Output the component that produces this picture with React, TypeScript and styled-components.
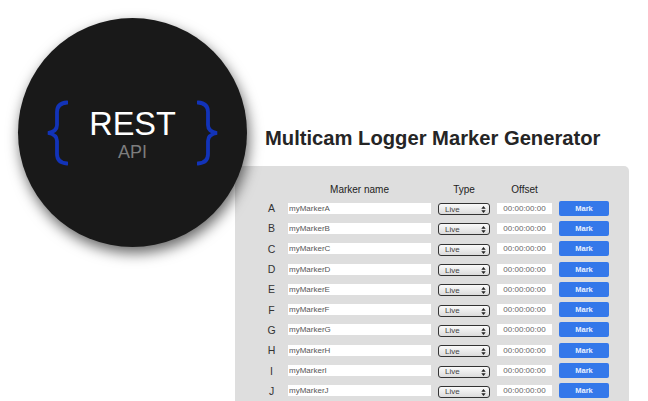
import React from 'react';
import styled, { createGlobalStyle, css } from 'styled-components';

const GlobalStyle = createGlobalStyle`
  html, body {
    margin: 0;
    height: 401px;
    overflow: hidden;
    background: #fff;
    font-family: "Liberation Sans", Arial, sans-serif;
    color: #222;
  }
`;

const Page = styled.div`
  position: relative;
  height: 401px;
  padding: 126px 0 0 235px;
  box-sizing: border-box;
  overflow: hidden;
`;

const Badge = styled.div`
  position: absolute;
  left: 18px;
  top: 18px;
  width: 229px;
  height: 229px;
  border-radius: 50%;
  background: #191919;
  box-shadow: 2px 6px 14px rgba(0, 0, 0, 0.6);
  display: flex;
  align-items: center;
  justify-content: space-between;
  padding: 0 28px;
  box-sizing: border-box;
  z-index: 2;
`;

const BadgeText = styled.div`
  display: flex;
  flex-direction: column;
  align-items: center;
  margin-top: 4px;
`;

const RestLabel = styled.div`
  font-size: 32.5px;
  line-height: 34px;
  color: #fff;
`;

const ApiLabel = styled.div`
  font-size: 18px;
  line-height: 20px;
  margin-top: 1px;
  color: #7d7d7d;
`;

const Brace = styled.svg`
  width: 22px;
  height: 66px;
  flex: none;
`;

const Title = styled.h1`
  margin: 0 0 16px 30px;
  font-size: 20.2px;
  line-height: 24px;
  font-weight: 700;
  color: #252525;
  white-space: nowrap;
`;

const Panel = styled.div`
  width: 394px;
  padding: 14px 0 0 27px;
  box-sizing: border-box;
  height: 300px;
  background: #dedede;
  border-radius: 5px;
`;

const columns = css`
  display: grid;
  grid-template-columns: 19px 143px 52px 55px 50px;
  column-gap: 7px;
  align-items: center;
`;

const HeadRow = styled.div`
  ${columns}
  height: 18px;
`;

const MarkerRow = styled.div`
  ${columns}
  height: 20.3px;
`;

const HeadCell = styled.div`
  font-size: 10px;
  text-align: center;
  color: #222;
`;

const Letter = styled.div`
  font-size: 10.5px;
  text-align: center;
  color: #333;
`;

const NameInput = styled.input`
  height: 11px;
  border: 0;
  padding: 0 1px;
  margin: 0;
  background: #fff;
  font: 8px "Liberation Sans", Arial, sans-serif;
  color: #555;
  box-sizing: border-box;
  width: 100%;
  min-width: 0;
  outline: none;
`;

const SelectWrap = styled.div`
  position: relative;
  height: 12px;
  top: 1px;
`;

const TypeSelect = styled.select`
  appearance: none;
  display: block;
  width: 100%;
  height: 100%;
  border: 1px solid #333;
  border-radius: 3px;
  padding: 0 0 0 6px;
  margin: 0;
  background: linear-gradient(#fafafa, #dcdcdc);
  font: 8px "Liberation Sans", Arial, sans-serif;
  color: #444;
  box-sizing: border-box;
  outline: none;
`;

const Arrows = styled.svg`
  position: absolute;
  right: 4px;
  top: 3px;
  width: 5px;
  height: 7px;
  pointer-events: none;
`;

const OffsetInput = styled.input`
  height: 11px;
  border: 0;
  padding: 0;
  margin: 0;
  background: #fff;
  font: 8px "Liberation Sans", Arial, sans-serif;
  color: #666;
  text-align: center;
  box-sizing: border-box;
  width: 100%;
  min-width: 0;
  outline: none;
`;

const MarkButton = styled.button`
  height: 15px;
  border: 0;
  border-radius: 2px;
  padding: 0;
  background: #3478ea;
  color: #e8f0ff;
  font: 700 7.5px "Liberation Sans", Arial, sans-serif;
`;

const letters = ['A', 'B', 'C', 'D', 'E', 'F', 'G', 'H', 'I', 'J'];

export default function App() {
  return (
    <>
      <GlobalStyle />
      <Page>
        <Badge>
          <Brace viewBox="0 0 22 66">
            <path
              d="M21 2.5C14 3 11 6 11 12V25C11 29 8 32 2 33C8 34 11 37 11 41V54C11 60 14 63 21 63.5"
              fill="none"
              stroke="#1233b8"
              strokeWidth="3.8"
              strokeLinecap="round"
            />
          </Brace>
          <BadgeText>
            <RestLabel>REST</RestLabel>
            <ApiLabel>API</ApiLabel>
          </BadgeText>
          <Brace viewBox="0 0 22 66">
            <path
              d="M1 2.5C8 3 11 6 11 12V25C11 29 14 32 20 33C14 34 11 37 11 41V54C11 60 8 63 1 63.5"
              fill="none"
              stroke="#1233b8"
              strokeWidth="3.8"
              strokeLinecap="round"
            />
          </Brace>
        </Badge>
        <Title>Multicam Logger Marker Generator</Title>
        <Panel>
          <HeadRow>
            <span />
            <HeadCell>Marker name</HeadCell>
            <HeadCell>Type</HeadCell>
            <HeadCell>Offset</HeadCell>
          </HeadRow>
          {letters.map((letter) => (
            <MarkerRow key={letter}>
              <Letter>{letter}</Letter>
              <NameInput readOnly value={`myMarker${letter}`} />
              <SelectWrap>
                <TypeSelect defaultValue="Live">
                  <option>Live</option>
                </TypeSelect>
                <Arrows viewBox="0 0 5 7">
                  <path d="M2.5 0L4.7 2.8H.3zM2.5 7L.3 4.2H4.7z" fill="#222" />
                </Arrows>
              </SelectWrap>
              <OffsetInput readOnly value="00:00:00:00" />
              <MarkButton>Mark</MarkButton>
            </MarkerRow>
          ))}
        </Panel>
      </Page>
    </>
  );
}
